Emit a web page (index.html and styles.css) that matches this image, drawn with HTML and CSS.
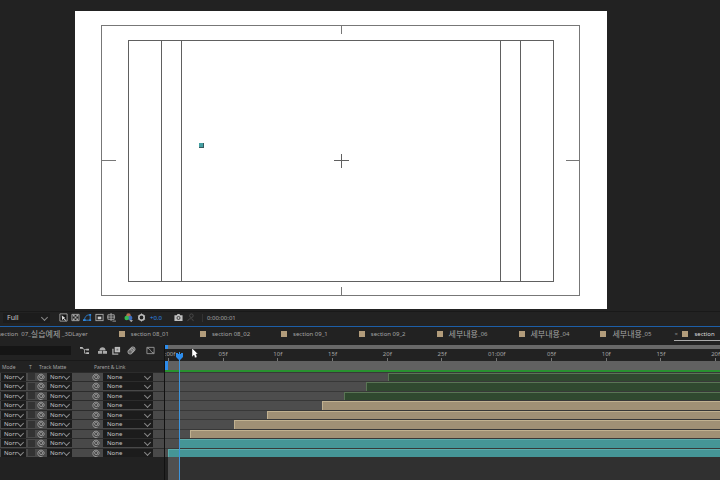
FILE: index.html
```html
<!DOCTYPE html>
<html lang="ko">
<head>
<meta charset="utf-8">
<title>Composition</title>
<link rel="stylesheet" href="styles.css">
</head>
<body>
<main class="viewer">
  <svg class="canvas" viewBox="0 0 532 298" preserveAspectRatio="none" role="img" aria-label="Composition">
    <rect width="532" height="298" fill="#fff"/>
    <g fill="none" stroke="#777" shape-rendering="crispEdges">
      <rect x="26.500" y="14.500" width="478" height="270"/>
      <path d="M266.500 15v8M266.500 276v9M27 149.500h14M491 149.500h14"/>
      <g stroke="#606060">
        <rect x="53.500" y="29.500" width="425" height="241"/>
        <path d="M86.500 30v240M106.500 30v240M425.500 30v240M445.500 30v240M266.500 143v14M259 149.500h15"/>
      </g>
    </g>
    <rect x="124" y="132" width="5" height="5" fill="#365a5d"/>
    <rect x="124" y="132" width="4" height="4" fill="#45a0a3"/>
  </svg>
</main>

<div class="toolbar">
  <label class="pick resolution"><select aria-label="Resolution"><option>Full</option></select></label>
  <div class="view-tools">
    <button class="icon" aria-label="Fast previews"><svg viewBox="0 0 10 10"><path d="M1 1h8v8H1z" fill="#111" stroke="#aaa"/><path d="M3 2.500l4 3H5.500L8 8 7 8.500 5 6.500 3.500 8z" fill="#ddd"/></svg></button>
    <button class="icon" aria-label="Transparency grid"><svg viewBox="0 0 10 10"><path d="M1 1.500h8v7H1z" fill="none" stroke="#aaa"/><path d="M2 2h2v2H2zM6 2h2v2H6zM4 4h2v2H4zM2 6h2v2H2zM6 6h2v2H6z" fill="#aaa"/></svg></button>
    <button class="icon" aria-label="Mask visibility"><svg viewBox="0 0 10 10"><path d="M1.500 8C2 5 3 2 8 2v6z" fill="none" stroke="#2f86dc"/><path d="M0 7h3v2H0zM7 1h2v2H7zM7 7h2v2H7z" fill="#2f86dc"/></svg></button>
    <button class="icon" aria-label="Region of interest"><svg viewBox="0 0 10 10"><rect x="1" y="1.500" width="8" height="7" fill="none" stroke="#aaa"/><path d="M3 4h4v3H3z" fill="#ccc"/></svg></button>
    <button class="icon" aria-label="Guides"><svg viewBox="0 0 10 10"><path d="M1 2h7v5H1zM4.500 0v9M0 4.500h9M6 9h4" fill="none" stroke="#aaa"/></svg></button>
  </div>
  <div class="color-tools">
    <button class="icon" aria-label="Channels"><svg viewBox="0 0 10 10"><circle cx="5" cy="2.800" r="2.500" fill="#b5714f"/><circle cx="6.800" cy="5.500" r="2.500" fill="#3f6fc0"/><circle cx="3" cy="5.500" r="2.500" fill="#37b955"/><path d="M6 8h4L8 10z" fill="#ccc"/></svg></button>
    <button class="icon" aria-label="Reset exposure"><svg viewBox="0 0 10 10"><circle cx="5" cy="5" r="3" fill="none" stroke="#bbb" stroke-width="1.800"/><path d="M5 .5v2M9 3L7 4M9 7L7 6M5 9.500v-2M1 7l2-1M1 3l2 1" stroke="#bbb"/></svg></button>
    <span class="exposure">+0.0</span>
  </div>
  <div class="snap-tools">
    <button class="icon" aria-label="Take snapshot"><svg viewBox="0 0 10 10"><path d="M1 2.500h2L4 1h2l1 1.500h2.500V9h-9V2.500z" fill="#c0c0c0"/><circle cx="5" cy="5.500" r="1.700" fill="none" stroke="#333"/></svg></button>
    <button class="icon dim" aria-label="Show snapshot"><svg viewBox="0 0 10 10"><circle cx="6" cy="3" r="2" fill="none" stroke="#aaa"/><path d="M2 9c0-3 6-4 6 0" fill="none" stroke="#aaa"/></svg></button>
  </div>
  <span class="timecode">0:00:00:01</span>
</div>

<section class="dock">
  <nav class="tabs">
    <a class="tab first" href="#">section&nbsp; 07_<span class="ko">실습예제</span>&nbsp;_3DLayer</a>
    <a class="tab" href="#"><i class="chip"></i>section 08_01</a>
    <a class="tab" href="#"><i class="chip"></i>section 08_02</a>
    <a class="tab" href="#"><i class="chip"></i>section 09_1</a>
    <a class="tab" href="#"><i class="chip"></i>section 09_2</a>
    <a class="tab" href="#"><i class="chip"></i><span class="ko">세부내용</span>_06</a>
    <a class="tab" href="#"><i class="chip"></i><span class="ko">세부내용</span>_04</a>
    <a class="tab" href="#"><i class="chip"></i><span class="ko">세부내용</span>_05</a>
    <a class="tab active" href="#"><span class="close">×</span><i class="chip"></i>section</a>
  </nav>
  <div class="timeline">
    <div class="layers">
      <div class="controls">
        <input class="search" type="text" aria-label="Search layers">
        <button class="icon" aria-label="Mini flowchart"><svg viewBox="0 0 10 10"><path d="M2 2l3 2h3M5 4v4h3" fill="none" stroke="#aaa"/><path d="M0 1h3v2H0zM7 3h3v2H7zM7 7h3v2H7z" fill="#bbb"/></svg></button>
        <button class="icon shy" aria-label="Hide shy layers"><svg viewBox="0 0 10 10"><path d="M0 5.500h10v3H0zM1.500 5c0-5 7-5 7 0z" fill="#aaa"/><path d="M5 5v4" stroke="#333"/></svg></button>
        <button class="icon blend" aria-label="Frame blending"><svg viewBox="0 0 10 10"><path d="M1 3v6h6" fill="none" stroke="#aaa" stroke-width="1.500"/><path d="M3 1h6v6H3z" fill="#bbb"/><path d="M5 3h2v2H5z" fill="#777"/></svg></button>
        <button class="icon blur" aria-label="Motion blur"><svg viewBox="0 0 10 10"><g fill="#666" stroke="#aaa"><circle cx="6.500" cy="3.500" r="2.500"/><circle cx="5" cy="5" r="2.500"/><circle cx="3.500" cy="6.500" r="2.500"/></g></svg></button>
        <button class="icon graph" aria-label="Graph editor"><svg viewBox="0 0 10 10"><path d="M1 1.500h8v7H1zM1 2c4 0 4 6 8 6" fill="none" stroke="#999"/></svg></button>
      </div>
      <table class="layer-table">
        <colgroup><col class="c-mode"><col class="c-t"><col class="c-matte"><col class="c-parent"><col></colgroup>
        <thead><tr><th>Mode</th><th>T</th><th>Track Matte</th><th class="parent-head">Parent &amp; Link</th><th></th></tr></thead>
        <tbody id="rows"></tbody>
      </table>
    </div>
    <div class="track-panel">
      <div class="navigator"></div>
      <div class="ruler">
        <span>0:00f</span><span>05f</span><span>10f</span><span>15f</span><span>20f</span><span>25f</span><span>01:00f</span><span>05f</span><span>10f</span><span>15f</span><span>20f</span>
      </div>
      <div class="work-area"></div>
      <div class="tracks" id="tracks"></div>
      <div class="below"></div>
      <div class="playhead"><svg viewBox="0 0 7 8"><path d="M0 1h2v1h3V1h2v4L4 8H3L0 5z" fill="#2d8ceb"/></svg></div>
      <svg class="cursor" viewBox="0 0 7 11"><path d="M1 0v9l2-2 1 3 2-1-1-3h2z" fill="#fff" stroke="#222" stroke-width=".4"/></svg>
    </div>
  </div>
</section>
<script src="app.js"></script>
</body>
</html>
```
FILE: styles.css
```css
* { box-sizing: border-box; }
body {
  margin: 0;
  height: 100vh;
  display: flex;
  flex-direction: column;
  overflow: hidden;
  background: #222;
  color: #a4a4a4;
  font: 6px/8px "Noto Sans", "Noto Sans CJK KR", sans-serif;
}
button, input, select {
  margin: 0;
  padding: 0;
  border: 0;
  border-radius: 0;
  background: none;
  color: inherit;
  font: inherit;
}
svg { display: block; }
.icon { width: 9px; height: 9px; flex: none; }
.icon svg { width: 100%; height: 100%; }
.dim { opacity: .3; }

.viewer {
  flex: 1;
  min-height: 0;
  padding: 11px 113px 2px 75px;
  border-bottom: 1px solid #191919;
}
.canvas { width: 100%; height: 100%; }

.toolbar {
  display: flex;
  align-items: center;
  height: 14px;
  padding: 0 0 3px 3px;
}
.pick {
  position: relative;
  display: block;
  background: #1c1c1c;
  color: #c4c4c4;
}
.pick select {
  display: block;
  width: 100%;
  height: 8px;
  padding: 0 8px 0 4px;
  appearance: none;
  overflow: hidden;
}
.pick::after {
  content: "";
  position: absolute;
  right: 3px;
  top: 1px;
  width: 4px;
  height: 4px;
  border: solid #888;
  border-width: 0 1px 1px 0;
  transform: rotate(45deg);
  pointer-events: none;
}
.resolution { width: 47px; font-size: 7px; }
.resolution select { height: 10px; line-height: 10px; }
.resolution::after { top: 2px; }
.view-tools { display: flex; gap: 3px; margin-left: 9px; }
.color-tools { display: flex; align-items: center; gap: 4px; margin-left: 8px; }
.exposure { color: #2d8ceb; }
.snap-tools { display: flex; gap: 3px; margin-left: 12px; }
.timecode { margin-left: 7px; padding: 0 4px; border-left: 1px solid #333; }

.dock { border-top: 1px solid #1d5fa8; }
.tabs {
  display: flex;
  gap: 31px;
  height: 18px;
  padding-top: 2px;
  overflow: hidden;
}
.tab {
  position: relative;
  display: flex;
  flex: none;
  align-items: center;
  height: 10px;
  color: inherit;
  text-decoration: none;
  white-space: nowrap;
}
.first { margin-left: -2px; }
.ko { font-size: 8px; }
.chip { width: 6px; height: 6px; margin-right: 6px; background: #b29c7b; }
.active { color: #ddd; }
.active::after {
  content: "";
  position: absolute;
  left: -8px;
  right: -20px;
  bottom: -2px;
  height: 1px;
  background: #aaa;
}
.close { position: absolute; left: -8px; color: #888; }

.timeline {
  display: grid;
  grid-template-columns: 165px 1fr;
  height: 135px;
}
.layers { border-right: 1px solid #111; }
.controls {
  display: flex;
  align-items: center;
  height: 16px;
  padding-bottom: 4px;
  border-bottom: 1px solid #191919;
}
.search { width: 71px; height: 9px; margin-right: 9px; background: #151515; }
.shy { margin-left: 9px; }
.blend { margin-left: 5px; }
.blur { margin-left: 6px; }
.graph { margin-left: 10px; }

.layer-table { width: 100%; border-collapse: collapse; table-layout: fixed; }
.layer-table th {
  height: 11px;
  padding: 1px 2px 0;
  font-size: 5px;
  font-weight: 400;
  text-align: left;
  white-space: nowrap;
}
.c-mode { width: 27px; }
.c-t { width: 10px; }
.c-matte { width: 35px; }
.c-parent { width: 81px; }
.layer-table .parent-head { padding-left: 22px; }
.layer-table td { padding: 0; background: #494949; border-top: 1px solid #2c2c2c; }
.layer-table tbody tr { height: 9px; }
.layer-table tbody tr:nth-child(2n) { height: 10px; }
.mode { width: 25px; margin-left: 1px; }
.mode select { padding-left: 3px; padding-right: 9px; }
.switch { display: block; width: 7px; height: 7px; margin: 0 1px; background: #333; }
.cell { display: flex; align-items: center; }
.whip { width: 8px; height: 8px; flex: none; }
.matte { width: 25px; margin-left: 2px; }
.matte select { padding-left: 3px; padding-right: 9px; }
.linked { padding-left: 20px; }
.linked .whip { margin-right: 3px; }
.parent { flex: 1; }

.track-panel {
  position: relative;
  display: flex;
  flex-direction: column;
  overflow: hidden;
}
.navigator { height: 4px; background: linear-gradient(to right, #2d8ceb 3px, #696969 3px); }
.ruler {
  display: grid;
  grid-template-columns: repeat(11, 1fr);
  height: 12px;
  margin: 0 -23px 0 -24px;
  padding-top: 1px;
  text-align: center;
}
.ruler span::after {
  content: "";
  display: block;
  width: 1px;
  height: 3px;
  margin: 0 auto;
  background: #777;
}
.work-area {
  height: 11px;
  background: linear-gradient(to right, #2d8ceb 3px, #616161 3px);
  border-bottom: 2px solid #28912f;
}
.tracks {
  display: grid;
  grid-template-rows: repeat(9, 1fr);
  height: 85px;
}
.track { background: #4d4d4d; border-top: 1px solid #383838; }
.bar { height: 100%; margin-left: calc(3px + var(--start) * 11px); border-top: 1px solid; border-left: 1px solid; }
.green { background: #30492f; border-color: #5a7555; }
.sand { background: #a09075; border-color: #c1b190; }
.teal { background: #459596; border-color: #5cabab; }
.below { flex: 1; margin-left: 3px; background: linear-gradient(to right, #505050 11px, #303030 11px); }
.playhead {
  position: absolute;
  top: 7px;
  bottom: 0;
  left: 14px;
  width: 1px;
  background: #3c94dc;
}
.playhead svg { width: 7px; height: 8px; margin-left: -3px; }
.cursor { position: absolute; left: 26px; top: 3px; width: 7px; height: 11px; }
```
FILE: app.js
```js
const layers = [
  { start: 20, color: "green" },
  { start: 18, color: "green" },
  { start: 16, color: "green" },
  { start: 14, color: "sand" },
  { start: 9, color: "sand" },
  { start: 6, color: "sand" },
  { start: 2, color: "sand" },
  { start: 1, color: "teal" },
  { start: 0, color: "teal" }
];

const whip = '<svg class="whip" viewBox="0 0 10 10"><path d="M6.5 6.500A2 2 0 1 1 7 4v2c0 2 2 1 2-1A4 4 0 1 0 7 9" fill="none" stroke="#aaa"/></svg>';
const pick = (name, value) =>
  `<label class="pick ${name}"><select aria-label="${name}"><option>${value}</option></select></label>`;

document.getElementById("rows").innerHTML = layers.map(() => `<tr>
  <td>${pick("mode", "Normal")}</td>
  <td><span class="switch"></span></td>
  <td><div class="cell">${whip}${pick("matte", "None")}</div></td>
  <td><div class="cell linked">${whip}${pick("parent", "None")}</div></td>
  <td></td></tr>`).join("");

document.getElementById("tracks").innerHTML = layers.map(l =>
  `<div class="track"><div class="bar ${l.color}" style="--start:${l.start}"></div></div>`).join("");
```
